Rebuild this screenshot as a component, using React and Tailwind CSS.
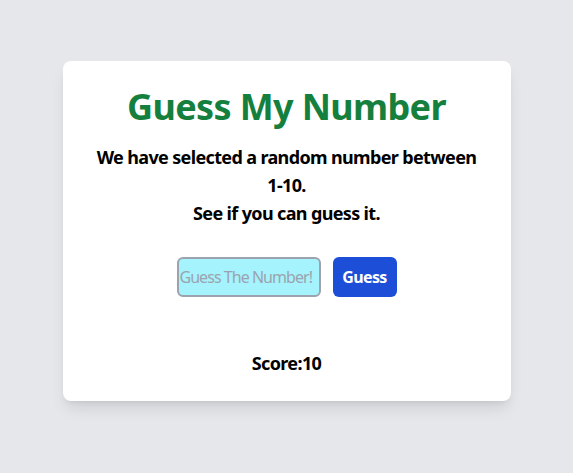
import React, { useState } from 'react';

const App = () => {
  const [guess, setGuess] = useState('');
  const [score] = useState(10);

  return (
    <div className="min-h-screen bg-[#e5e7eb] flex justify-center pt-[61px] font-['Noto_Sans',sans-serif] tracking-[-0.04em]">
      <div className="w-[448px] h-[340px] bg-white rounded-lg shadow-lg pt-[26px] pb-6 px-6 text-center flex flex-col">
        <h1 className="text-4xl font-bold text-[#15803d]">Guess My Number</h1>
        <p className="mt-4 text-lg font-bold text-black">
          We have selected a random number between
          <br />
          1-10.
          <br />
          See if you can guess it.
        </p>

        <div className="mt-[30px] flex justify-center items-center gap-3">
          <input
            type="text"
            value={guess}
            onChange={(e) => setGuess(e.target.value)}
            placeholder="Guess The Number!"
            className="w-36 h-10 px-[1px] bg-[#a5f3fc] border-2 border-[#9ca3af] rounded-md text-base tracking-[-0.06em] placeholder:text-[#9ca3af] outline-none"
          />
          <button className="w-16 h-10 bg-[#1d4ed8] text-white font-bold rounded-md">
            Guess
          </button>
        </div>

        <p className="mt-auto text-lg font-bold text-black">Score:{score}</p>
      </div>
    </div>
  );
};

export default App;
